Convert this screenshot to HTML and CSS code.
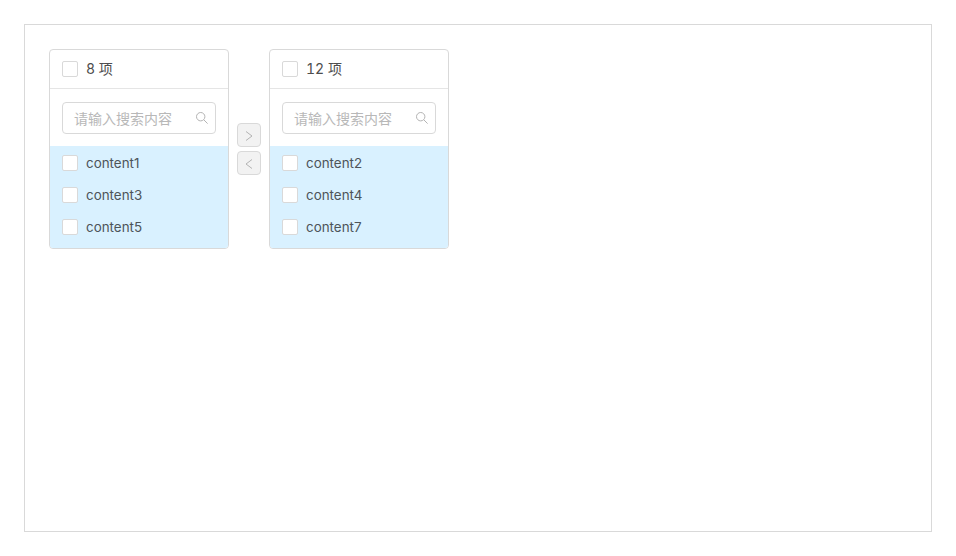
FILE: index.html
```html
<!DOCTYPE html>
<html lang="zh">
<head>
    <meta charset="UTF-8">
    <title>Transfer</title>
    <link rel="stylesheet" href="styles.css">
</head>
<body>
    <div class="frame">
        <div class="transfer">
            <div class="panel">
                <div class="panel-header">
                    <span class="checkbox"></span>
                    <span class="count">8 项</span>
                </div>
                <div class="search">
                    <div class="search-box">
                        <span class="placeholder">请输入搜索内容</span>
                        <svg class="search-icon" viewBox="0 0 12 12" width="12" height="12">
                            <circle cx="4.7" cy="4.7" r="4.2"></circle>
                            <path d="M7.8 7.8L11.6 11.6"></path>
                        </svg>
                    </div>
                </div>
                <ul class="list">
                    <li><span class="checkbox"></span>content1</li>
                    <li><span class="checkbox"></span>content3</li>
                    <li><span class="checkbox"></span>content5</li>
                </ul>
            </div>
            <div class="operations">
                <button class="op-button">
                    <svg viewBox="0 0 10 12" width="10" height="12"><path d="M2 1.5L8 6L2 10.5"></path></svg>
                </button>
                <button class="op-button">
                    <svg viewBox="0 0 10 12" width="10" height="12"><path d="M8 1.5L2 6L8 10.5"></path></svg>
                </button>
            </div>
            <div class="panel">
                <div class="panel-header">
                    <span class="checkbox"></span>
                    <span class="count">12 项</span>
                </div>
                <div class="search">
                    <div class="search-box">
                        <span class="placeholder">请输入搜索内容</span>
                        <svg class="search-icon" viewBox="0 0 12 12" width="12" height="12">
                            <circle cx="4.7" cy="4.7" r="4.2"></circle>
                            <path d="M7.8 7.8L11.6 11.6"></path>
                        </svg>
                    </div>
                </div>
                <ul class="list">
                    <li><span class="checkbox"></span>content2</li>
                    <li><span class="checkbox"></span>content4</li>
                    <li><span class="checkbox"></span>content7</li>
                </ul>
            </div>
        </div>
    </div>
</body>
</html>
```

FILE: styles.css
```css
html, body {
    height: 100%;
}
body {
    margin: 0;
    padding: 24px;
    box-sizing: border-box;
    background-color: #fff;
    font-family: Inter, "Noto Sans CJK SC", sans-serif;
    font-size: 14px;
    color: #4d4d4d;
}
.frame {
    height: 100%;
    box-sizing: border-box;
    padding: 24px;
    border: 1px solid #d9d9d9;
}
.transfer {
    display: flex;
    align-items: center;
    width: max-content;
}
.panel {
    width: 180px;
    height: 200px;
    box-sizing: border-box;
    border: 1px solid #d9d9d9;
    border-radius: 4px;
    overflow: hidden;
}
.panel-header {
    display: flex;
    align-items: center;
    gap: 8px;
    height: 39px;
    padding: 0 12px;
    box-sizing: border-box;
    border-bottom: 1px solid #e5e5e5;
}
.count {
    font-feature-settings: "tnum";
    margin-top: -2px;
}
.checkbox {
    flex: none;
    width: 16px;
    height: 16px;
    box-sizing: border-box;
    background-color: #fff;
    border: 1px solid #d9d9d9;
    border-radius: 2px;
}
.search {
    padding: 13px 12px 12px;
}
.search-box {
    display: flex;
    align-items: center;
    justify-content: space-between;
    height: 32px;
    padding: 0 7px 0 11px;
    box-sizing: border-box;
    border: 1px solid #d9d9d9;
    border-radius: 4px;
}
.placeholder {
    color: #b8b8b8;
}
.search-icon {
    fill: none;
    stroke: #b3b3b3;
    stroke-width: 1;
}
.list {
    margin: 0;
    padding: 0;
    list-style: none;
    background-color: #d9f1ff;
    height: 102px;
    font-size: 13.4px;
    color: #4d5459;
}
.list li {
    display: flex;
    align-items: center;
    gap: 8px;
    height: 32px;
    box-sizing: border-box;
    padding: 2px 12px 0;
}
.operations {
    display: flex;
    flex-direction: column;
    gap: 4px;
    margin: 0 8px;
}
.op-button {
    display: flex;
    align-items: center;
    justify-content: center;
    width: 24px;
    height: 24px;
    padding: 0;
    background-color: #f2f2f2;
    border: 1px solid #d9d9d9;
    border-radius: 4px;
}
.op-button svg {
    fill: none;
    stroke: #b3b3b3;
    stroke-width: 1;
    margin-top: 2px;
}
```
